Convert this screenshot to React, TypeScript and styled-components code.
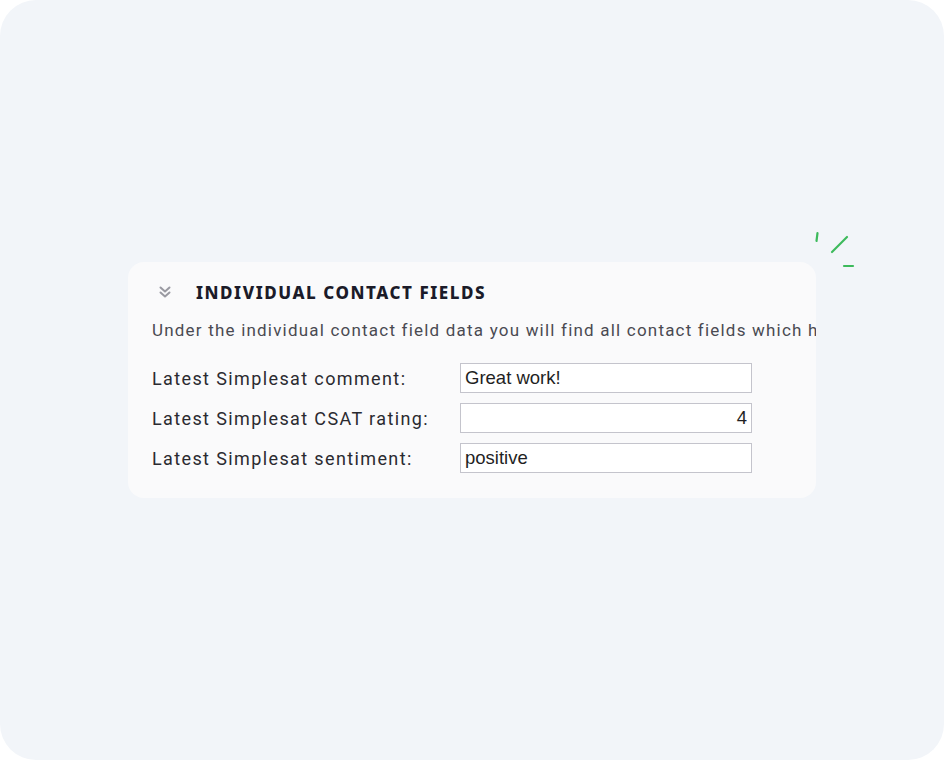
import React from "react";
import styled, { createGlobalStyle } from "styled-components";

const Global = createGlobalStyle`
  html, body { margin: 0; padding: 0; background: #ffffff; }
  body { width: 944px; height: 760px; overflow: hidden; }
`;

const Frame = styled.div`
  width: 944px;
  height: 760px;
  border-radius: 36px;
  background: #f2f5f9;
  display: flex;
  align-items: flex-start;
  justify-content: flex-start;
  padding: 262px 0 0 128px;
  box-sizing: border-box;
  position: relative;
`;

const CardWrap = styled.div`
  position: relative;
`;

const Card = styled.section`
  width: 688px;
  height: 236px;
  box-sizing: border-box;
  background: #fafafb;
  border-radius: 16px;
  overflow: hidden;
  padding: 18px 0 0 24px;
  display: flex;
  flex-direction: column;
`;

const Header = styled.div`
  display: flex;
  align-items: center;
  gap: 24px;
  height: 24px;
  padding-left: 6px;
`;

const Title = styled.h2`
  margin: 0;
  font-family: "Noto Sans", Inter, sans-serif;
  font-weight: 800;
  font-size: 17px;
  letter-spacing: 1.55px;
  color: #1b1b29;
`;

const Description = styled.p`
  margin: 16px 0 0 0;
  white-space: nowrap;
  font-family: Roboto, "Noto Sans", sans-serif;
  font-size: 17px;
  line-height: 20px;
  letter-spacing: 1.2px;
  color: #4a4a52;
`;

const Fields = styled.div`
  margin-top: 23px;
  display: grid;
  grid-template-columns: 308px 292px;
  row-gap: 10px;
  align-items: center;
`;

const Label = styled.label`
  font-family: Roboto, "Noto Sans", sans-serif;
  font-size: 18px;
  letter-spacing: 1.38px;
  color: #2a2a30;
`;

const Input = styled.input<{ $align?: "left" | "right" }>`
  width: 292px;
  height: 30px;
  box-sizing: border-box;
  border: 1.5px solid #c4c4cc;
  background: #ffffff;
  padding: 0 4px;
  font-family: "Liberation Sans", Arial, sans-serif;
  font-size: 18.5px;
  color: #1f1f24;
  text-align: ${(p) => p.$align ?? "left"};
  outline: none;
`;

const Sparkle = styled.svg`
  position: absolute;
  left: 680px;
  top: -32px;
`;

const Chevrons = () => (
  <svg width="14" height="14" viewBox="0 0 14 14" fill="none">
    <path d="M2.5 2.5 L7 6.5 L11.5 2.5" stroke="#9a9aa2" strokeWidth="2" strokeLinecap="round" strokeLinejoin="round" />
    <path d="M2.5 7.5 L7 11.5 L11.5 7.5" stroke="#9a9aa2" strokeWidth="2" strokeLinecap="round" strokeLinejoin="round" />
  </svg>
);

export default function App() {
  return (
    <>
      <Global />
      <Frame>
        <CardWrap>
          <Card>
            <Header>
              <Chevrons />
              <Title>INDIVIDUAL CONTACT FIELDS</Title>
            </Header>
            <Description>
              Under the individual contact field data you will find all contact fields which have been filled for this contact.
            </Description>
            <Fields>
              <Label>Latest Simplesat comment:</Label>
              <Input readOnly defaultValue="Great work!" />
              <Label>Latest Simplesat CSAT rating:</Label>
              <Input readOnly defaultValue="4" $align="right" />
              <Label>Latest Simplesat sentiment:</Label>
              <Input readOnly defaultValue="positive" />
            </Fields>
          </Card>
          <Sparkle width="60" height="50" viewBox="0 0 60 50">
            <path d="M9.5 3 L8.5 11" stroke="#3dba5c" strokeWidth="2.2" strokeLinecap="round" />
            <path d="M24 22 L39 7" stroke="#3dba5c" strokeWidth="2.2" strokeLinecap="round" />
            <path d="M36 36 L45 36" stroke="#3dba5c" strokeWidth="2.2" strokeLinecap="round" />
          </Sparkle>
        </CardWrap>
      </Frame>
    </>
  );
}
